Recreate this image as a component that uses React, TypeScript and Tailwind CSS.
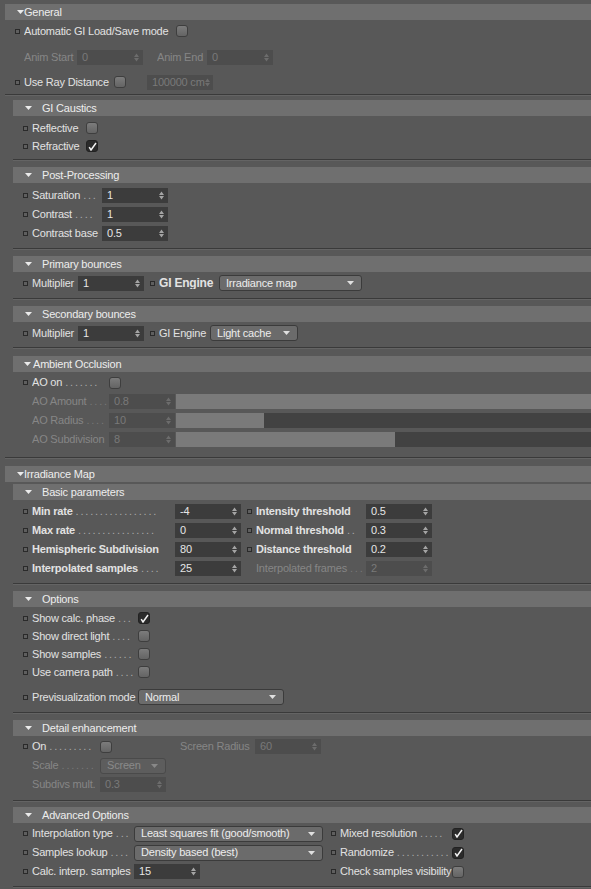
import React from 'react';

// small helpers for the attribute-manager look
const Tri = () => (
  <svg width="7" height="4" viewBox="0 0 7 4" className="shrink-0">
    <path d="M0 0h7L3.5 4z" fill="#ebebeb" />
  </svg>
);

const Spin = ({ dim = false }: { dim?: boolean }) => (
  <svg width="5" height="9" viewBox="0 0 5 9" className="shrink-0">
    <path d="M0 4L2.5 0.5L5 4z M0 5h5L2.5 8.5z" fill={dim ? '#6c6c6c' : '#a4a4a4'} />
  </svg>
);

const Ind = ({ className = '' }: { className?: string }) => (
  <span className={`w-[5px] h-[5px] border border-[#2a2a2a] bg-[#5f5f5f] mr-[4px] shrink-0 ${className}`} />
);

const NoInd = ({ className = '' }: { className?: string }) => <span className={`w-[9px] shrink-0 ${className}`} />;

interface LabelProps {
  text: string;
  className?: string;
  dots?: number;
  bold?: boolean;
  disabled?: boolean;
}

const Label = ({ text, className = '', dots = 0, bold = false, disabled = false }: LabelProps) => (
  <div className={`flex items-center whitespace-nowrap overflow-hidden shrink-0 ${disabled ? 'text-[#868686]' : 'text-[#e2e2e2]'} ${className}`}>
    <span className={bold ? 'font-bold' : ''}>{text}</span>
    {dots > 0 && (
      <span className={`min-w-0 overflow-hidden ml-[3px] tracking-[1.8px] ${disabled ? 'text-[#777]' : 'text-[#a9a9a9]'}`}>
        {'.'.repeat(dots)}
      </span>
    )}
  </div>
);

const Field = ({ value, disabled = false, className = '' }: { value: string; disabled?: boolean; className?: string }) => (
  <div
    className={`w-[66px] h-[15px] flex items-center justify-between pl-[5px] pr-[4px] shrink-0 whitespace-nowrap ${
      disabled ? 'bg-[#4d4d4d] text-[#797979]' : 'bg-[#3c3c3c] text-[#e6e6e6]'
    } ${className}`}
  >
    <span>{value}</span>
    <Spin dim={disabled} />
  </div>
);

const Check = ({ on = false }: { on?: boolean }) => (
  <div
    className={`w-[12px] h-[12px] rounded-[3px] border shrink-0 flex items-center justify-center ${
      on ? 'bg-[#2b2b2b] border-[#222]' : 'bg-linear-to-b from-[#7c7c7c] to-[#646464] border-[#3e3e3e]'
    }`}
  >
    {on && (
      <svg width="9" height="9" viewBox="0 0 9 9">
        <path d="M1.2 5.2L3 8L8 1" stroke="#f2f2f2" strokeWidth="1.5" fill="none" />
      </svg>
    )}
  </div>
);

const Drop = ({ value, className = '', disabled = false }: { value: string; className?: string; disabled?: boolean }) => (
  <div
    className={`h-[16px] rounded-[3px] border flex items-center justify-between pl-[6px] pr-[7px] shrink-0 whitespace-nowrap ${
      disabled ? 'bg-[#5d5d5d] border-[#4a4a4a] text-[#8a8a8a]' : 'bg-[#6b6b6b] border-[#3b3b3b] text-[#ededed]'
    } ${className}`}
  >
    <span>{value}</span>
    <svg width="7" height="4" viewBox="0 0 7 4">
      <path d="M0 0h7L3.5 4z" fill={disabled ? '#888' : '#e0e0e0'} />
    </svg>
  </div>
);

const Slider = ({ fill }: { fill: string }) => (
  <div className="flex-1 h-[15px] bg-[#424242] ml-[1px]">
    <div className={`h-full bg-[#7a7a7a] ${fill}`} />
  </div>
);

const Row = ({ className = '', children }: { className?: string; children: React.ReactNode }) => (
  <div className={`flex items-center pl-[10px] ${className}`}>{children}</div>
);

const TopHeader = ({ title, className = '' }: { title: string; className?: string }) => (
  <div className={`h-[16px] bg-[#6f6f6f] flex items-center pl-[12px] text-[#ededed] ${className}`}>
    <Tri />
    <span>{title}</span>
  </div>
);

const SubHeader = ({ title, className = '', tight = false }: { title: string; className?: string; tight?: boolean }) => (
  <div className={`h-[16px] bg-[#6f6f6f] flex items-center text-[#ededed] ${tight ? 'pl-[11px]' : 'pl-[12px]'} ${className}`}>
    <Tri />
    <span className={tight ? 'ml-[2px]' : 'ml-[10px]'}>{title}</span>
  </div>
);

const Sep = ({ className = '' }: { className?: string }) => (
  <div className={className}>
    <div className="h-px bg-[#3a3a3a]" />
    <div className="h-px bg-[#646464]" />
  </div>
);

export default function App() {
  return (
    <div className="w-[591px] h-[889px] overflow-hidden bg-[#585858] text-[11px] leading-none tracking-[-0.2px] font-['Liberation_Sans',Arial,sans-serif] pt-[4px] pl-[5px]">
      {/* General */}
      <TopHeader title="General" />
      <Row className="mt-[2px] h-[18px]">
        <Ind />
        <Label text="Automatic GI Load/Save mode" className="w-[152px]" />
        <Check />
      </Row>
      <Row className="mt-[8px] h-[18px]">
        <NoInd />
        <Label text="Anim Start" disabled className="w-[53px]" />
        <Field value="0" disabled />
        <Label text="Anim End" disabled className="ml-[14px] w-[50px]" />
        <Field value="0" disabled />
      </Row>
      <Row className="mt-[7px] h-[18px]">
        <Ind />
        <Label text="Use Ray Distance" className="w-[90px]" />
        <Check />
        <Field value="100000 cm" disabled className="ml-[21px]" />
      </Row>
      <Sep className="mt-[3px]" />

      <div className="ml-[8px]">
        {/* GI Caustics */}
        <SubHeader title="GI Caustics" className="mt-[4px]" />
        <Row className="mt-[3px] h-[18px]">
          <Ind />
          <Label text="Reflective" className="w-[54px]" />
          <Check />
        </Row>
        <Row className="h-[18px]">
          <Ind />
          <Label text="Refractive" className="w-[54px]" />
          <Check on />
        </Row>
        <Sep className="mt-[4px]" />

        {/* Post-Processing */}
        <SubHeader title="Post-Processing" className="mt-[6px]" />
        <Row className="mt-[3px] h-[19px]">
          <Ind />
          <Label text="Saturation" dots={3} className="w-[70px]" />
          <Field value="1" />
        </Row>
        <Row className="h-[19px]">
          <Ind />
          <Label text="Contrast" dots={4} className="w-[70px]" />
          <Field value="1" />
        </Row>
        <Row className="h-[19px]">
          <Ind />
          <Label text="Contrast base" className="w-[70px]" />
          <Field value="0.5" />
        </Row>
        <Sep className="mt-[5px]" />

        {/* Primary bounces */}
        <SubHeader title="Primary bounces" className="mt-[6px]" />
        <Row className="mt-[2px] h-[18px]">
          <Ind />
          <Label text="Multiplier" className="w-[46px]" />
          <Field value="1" />
          <Ind className="ml-[6px]" />
          <Label text="GI Engine" bold className="w-[60px] text-[12px]" />
          <Drop value="Irradiance map" className="w-[143px]" />
        </Row>
        <Sep className="mt-[6px]" />

        {/* Secondary bounces */}
        <SubHeader title="Secondary bounces" className="mt-[6px]" />
        <Row className="mt-[2px] h-[18px]">
          <Ind />
          <Label text="Multiplier" className="w-[46px]" />
          <Field value="1" />
          <Ind className="ml-[6px]" />
          <Label text="GI Engine" className="w-[51px]" />
          <Drop value="Light cache" className="w-[88px]" />
        </Row>
        <Sep className="mt-[5px]" />

        {/* Ambient Occlusion */}
        <SubHeader title="Ambient Occlusion" tight className="mt-[7px]" />
        <Row className="mt-[1px] h-[19px]">
          <Ind />
          <Label text="AO on" dots={7} className="w-[77px]" />
          <Check />
        </Row>
        <Row className="h-[19px]">
          <NoInd />
          <Label text="AO Amount" dots={4} disabled className="w-[77px]" />
          <Field value="0.8" disabled />
          <Slider fill="w-full" />
        </Row>
        <Row className="h-[19px]">
          <NoInd />
          <Label text="AO Radius" dots={4} disabled className="w-[77px]" />
          <Field value="10" disabled />
          <Slider fill="w-[88px]" />
        </Row>
        <Row className="h-[19px]">
          <NoInd />
          <Label text="AO Subdivision" disabled className="w-[77px]" />
          <Field value="8" disabled />
          <Slider fill="w-[219px]" />
        </Row>
      </div>
      <Sep className="mt-[8px]" />

      {/* Irradiance Map */}
      <TopHeader title="Irradiance Map" className="mt-[7px] pl-[11px]" />
      <div className="ml-[8px]">
        <SubHeader title="Basic parameters" className="mt-[2px]" />
        <Row className="mt-[2px] h-[19px]">
          <Ind />
          <Label text="Min rate" bold dots={17} className="w-[143px]" />
          <Field value="-4" />
          <Ind className="ml-[6px]" />
          <Label text="Intensity threshold" bold className="w-[110px]" />
          <Field value="0.5" />
        </Row>
        <Row className="h-[19px]">
          <Ind />
          <Label text="Max rate" bold dots={16} className="w-[143px]" />
          <Field value="0" />
          <Ind className="ml-[6px]" />
          <Label text="Normal threshold" bold dots={2} className="w-[110px]" />
          <Field value="0.3" />
        </Row>
        <Row className="h-[19px]">
          <Ind />
          <Label text="Hemispheric Subdivision" bold className="w-[143px]" />
          <Field value="80" />
          <Ind className="ml-[6px]" />
          <Label text="Distance threshold" bold className="w-[110px]" />
          <Field value="0.2" />
        </Row>
        <Row className="h-[19px]">
          <Ind />
          <Label text="Interpolated samples" bold dots={4} className="w-[143px]" />
          <Field value="25" />
          <NoInd className="ml-[6px]" />
          <Label text="Interpolated frames" dots={3} disabled className="w-[110px]" />
          <Field value="2" disabled />
        </Row>
        <Sep className="mt-[5px]" />

        {/* Options */}
        <SubHeader title="Options" className="mt-[6px]" />
        <Row className="mt-[2px] h-[18px]">
          <Ind />
          <Label text="Show calc. phase" dots={3} className="w-[106px]" />
          <Check on />
        </Row>
        <Row className="h-[18px]">
          <Ind />
          <Label text="Show direct light" dots={4} className="w-[106px]" />
          <Check />
        </Row>
        <Row className="h-[18px]">
          <Ind />
          <Label text="Show samples" dots={6} className="w-[106px]" />
          <Check />
        </Row>
        <Row className="h-[18px]">
          <Ind />
          <Label text="Use camera path" dots={4} className="w-[106px]" />
          <Check />
        </Row>
        <Row className="mt-[7px] h-[18px]">
          <Ind />
          <Label text="Previsualization mode" className="w-[106px]" />
          <Drop value="Normal" className="w-[146px]" />
        </Row>
        <Sep className="mt-[6px]" />

        {/* Detail enhancement */}
        <SubHeader title="Detail enhancement" className="mt-[6px]" />
        <Row className="mt-[1px] h-[19px]">
          <Ind />
          <Label text="On" dots={9} className="w-[68px]" />
          <Check />
          <Label text="Screen Radius" disabled className="ml-[68px] w-[75px]" />
          <Field value="60" disabled />
        </Row>
        <Row className="h-[19px]">
          <NoInd />
          <Label text="Scale" dots={7} disabled className="w-[68px]" />
          <Drop value="Screen" disabled className="w-[66px]" />
        </Row>
        <Row className="h-[19px]">
          <NoInd />
          <Label text="Subdivs mult." disabled className="w-[68px]" />
          <Field value="0.3" disabled />
        </Row>
        <Sep className="mt-[6px]" />

        {/* Advanced Options */}
        <SubHeader title="Advanced Options" className="mt-[5px]" />
        <Row className="mt-[1px] h-[19px]">
          <Ind />
          <Label text="Interpolation type" dots={3} className="w-[102px]" />
          <Drop value="Least squares fit (good/smooth)" className="w-[189px]" />
          <Ind className="ml-[8px]" />
          <Label text="Mixed resolution" dots={5} className="w-[112px]" />
          <Check on />
        </Row>
        <Row className="h-[19px]">
          <Ind />
          <Label text="Samples lookup" dots={4} className="w-[102px]" />
          <Drop value="Density based (best)" className="w-[189px]" />
          <Ind className="ml-[8px]" />
          <Label text="Randomize" dots={11} className="w-[112px]" />
          <Check on />
        </Row>
        <Row className="h-[19px]">
          <Ind />
          <Label text="Calc. interp. samples" className="w-[102px]" />
          <div className="w-[189px] shrink-0">
            <Field value="15" />
          </div>
          <Ind className="ml-[8px]" />
          <Label text="Check samples visibility" className="w-[112px]" />
          <Check />
        </Row>
        <Sep className="mt-[5px]" />
      </div>
    </div>
  );
}
